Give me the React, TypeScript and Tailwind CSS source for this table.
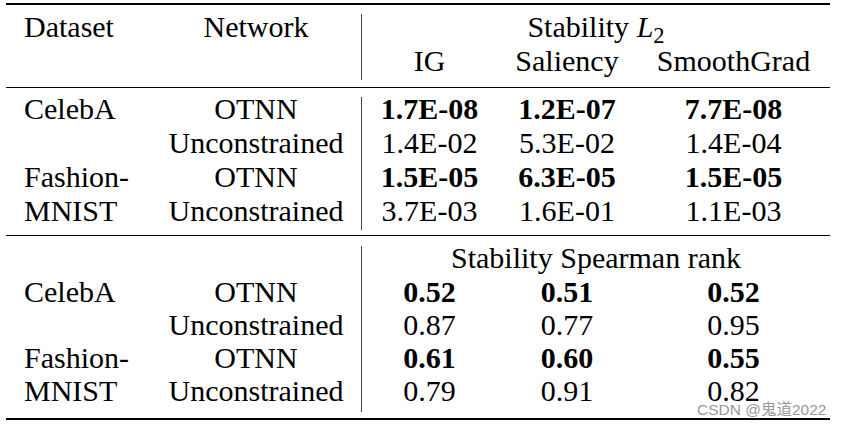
type Row = {
    dataset: string;
    network: string;
    values: string[];
    best?: boolean;
};

const l2Rows: Row[] = [
    { dataset: 'CelebA', network: 'OTNN', values: ['1.7E-08', '1.2E-07', '7.7E-08'], best: true },
    { dataset: '', network: 'Unconstrained', values: ['1.4E-02', '5.3E-02', '1.4E-04'] },
    { dataset: 'Fashion-', network: 'OTNN', values: ['1.5E-05', '6.3E-05', '1.5E-05'], best: true },
    { dataset: 'MNIST', network: 'Unconstrained', values: ['3.7E-03', '1.6E-01', '1.1E-03'] },
];

const rankRows: Row[] = [
    { dataset: 'CelebA', network: 'OTNN', values: ['0.52', '0.51', '0.52'], best: true },
    { dataset: '', network: 'Unconstrained', values: ['0.87', '0.77', '0.95'] },
    { dataset: 'Fashion-', network: 'OTNN', values: ['0.61', '0.60', '0.55'], best: true },
    { dataset: 'MNIST', network: 'Unconstrained', values: ['0.79', '0.91', '0.82'] },
];

const LeftCells = ({ rows }: { rows: Row[] }) => (
    <>
        {rows.map((r, i) => (
            <div key={i} className="contents">
                <div className="pl-[18px]">{r.dataset}</div>
                <div className="text-center">{r.network}</div>
            </div>
        ))}
    </>
);

const RightCells = ({ rows }: { rows: Row[] }) => (
    <>
        {rows.map((r, i) => (
            <div key={i} className="contents">
                {r.values.map((v, j) => (
                    <div key={j} className={r.best ? 'font-bold' : ''}>
                        {v}
                    </div>
                ))}
            </div>
        ))}
    </>
);

export default function App() {
    return (
        <div className="relative h-[427px] w-[841px] overflow-hidden bg-white text-black">
            <div className="ml-[6px] w-[824px] pt-[3px] [font-family:'Liberation_Serif',serif] text-[30px] leading-[34px]">
                <div className="border-t-2 border-black" />

                {/* header */}
                <div className="flex pt-[5px] pb-[9px]">
                    <div className="grid w-[338px] grid-cols-[162px_176px] grid-rows-[34px_34px]">
                        <div className="pl-[18px]">Dataset</div>
                        <div className="text-center">Network</div>
                    </div>
                    <div className="ml-[17px] mt-[4px] -mb-[2px] w-px bg-[#444]" />
                    <div className="grid grid-cols-[135px_140px_193px] grid-rows-[34px_34px] text-center">
                        <div className="col-span-3">
                            Stability <i>L</i>
                            <sub>2</sub>
                        </div>
                        <div>IG</div>
                        <div>Saliency</div>
                        <div>SmoothGrad</div>
                    </div>
                </div>

                <div className="border-t border-black" />

                {/* stability L2 */}
                <div className="flex pt-[4px] pb-[7px]">
                    <div className="grid w-[338px] grid-cols-[162px_176px] auto-rows-[34px]">
                        <LeftCells rows={l2Rows} />
                    </div>
                    <div className="ml-[17px] mt-[5px] -mb-[2px] w-px bg-[#444]" />
                    <div className="grid grid-cols-[135px_140px_193px] auto-rows-[34px] text-center">
                        <RightCells rows={l2Rows} />
                    </div>
                </div>

                <div className="border-t border-black" />

                {/* spearman rank */}
                <div className="flex pt-[5px] pb-[11px]">
                    <div className="grid w-[338px] grid-cols-[162px_176px] grid-rows-[34px_33px_33px_33px_33px]">
                        <div />
                        <div />
                        <LeftCells rows={rankRows} />
                    </div>
                    <div className="ml-[17px] mt-[5px] -mb-[5px] w-px bg-[#444]" />
                    <div className="grid grid-cols-[135px_140px_193px] grid-rows-[34px_33px_33px_33px_33px] text-center">
                        <div className="col-span-3">Stability Spearman rank</div>
                        <RightCells rows={rankRows} />
                    </div>
                </div>

                <div className="border-t-2 border-black" />
            </div>

            <div className="absolute left-[697px] top-[402px] [font-family:'Liberation_Sans','Noto_Sans_CJK_SC',sans-serif] text-[15.5px] leading-[15px] text-[#999]">
                CSDN @鬼道2022
            </div>
        </div>
    );
}
